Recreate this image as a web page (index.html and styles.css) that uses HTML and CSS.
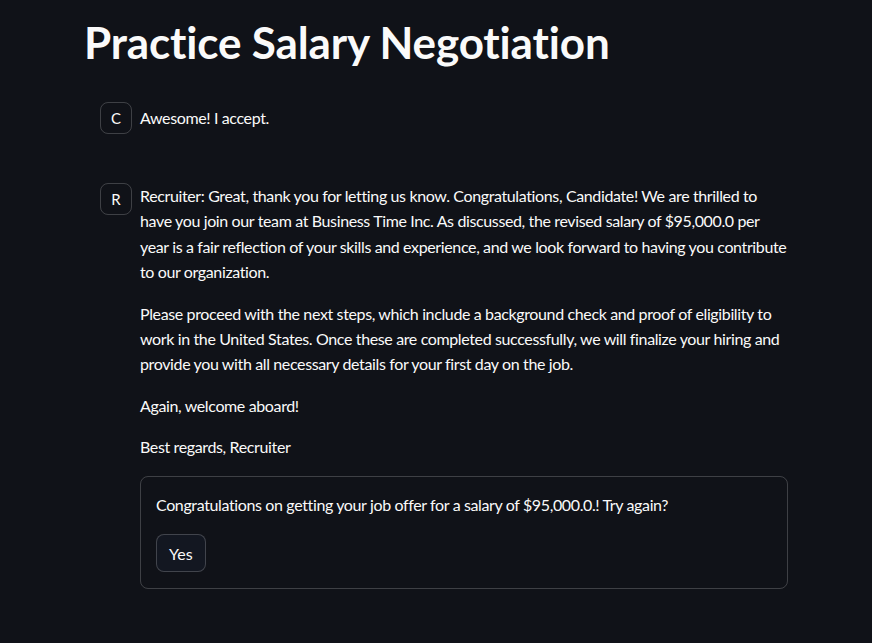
FILE: index.html
```html
<!DOCTYPE html>
<html lang="en">
<head>
<meta charset="utf-8">
<title>Practice Salary Negotiation</title>
<link rel="stylesheet" href="styles.css">
</head>
<body>
<main class="main">
  <h1 class="title">Practice Salary Negotiation</h1>

  <div class="chat-msg chat-msg--single">
    <div class="avatar">C</div>
    <div class="msg-body">
      <p>Awesome! I accept.</p>
    </div>
  </div>

  <div class="chat-msg">
    <div class="avatar">R</div>
    <div class="msg-body">
      <p>Recruiter: Great, thank you for letting us know. Congratulations, Candidate! We are thrilled to have you join our team at Business Time Inc. As discussed, the revised salary of $95,000.0 per year is a fair reflection of your skills and experience, and we look forward to having you contribute to our organization.</p>
      <p>Please proceed with the next steps, which include a background check and proof of eligibility to work in the United States. Once these are completed successfully, we will finalize your hiring and provide you with all necessary details for your first day on the job.</p>
      <p>Again, welcome aboard!</p>
      <p>Best regards, Recruiter</p>
      <div class="form-box">
        <p class="form-text">Congratulations on getting your job offer for a salary of $95,000.0.! Try again?</p>
        <button class="btn" type="button">Yes</button>
      </div>
    </div>
  </div>
</main>
</body>
</html>
```
FILE: styles.css
```css
html, body {
  margin: 0;
  padding: 0;
  background: #101218;
  color: #fafafa;
  font-family: "Lato", "Liberation Sans", sans-serif;
  font-size: 16px;
  letter-spacing: -0.37px;
}

.main {
  padding: 0 84px;
}

.title {
  margin: 0;
  padding: 16px 0 18px;
  font-size: 44px;
  font-weight: 700;
  line-height: 52px;
  letter-spacing: -0.14px;
  color: #fafafa;
}

.chat-msg {
  display: flex;
  gap: 8px;
  padding: 16px 0 16px 16px;
}

.chat-msg--single {
  align-items: center;
  margin-bottom: 17px;
}

.avatar {
  flex: 0 0 auto;
  width: 32px;
  height: 32px;
  box-sizing: border-box;
  border: 1px solid rgba(250, 250, 250, 0.2);
  border-radius: 8px;
  display: flex;
  align-items: center;
  justify-content: center;
  font-size: 15px;
  letter-spacing: 0;
  color: #fafafa;
}

.msg-body {
  flex: 1 1 auto;
  min-width: 0;
}

.msg-body p {
  margin: 0 0 16px;
  line-height: 25.4px;
}

.chat-msg--single .msg-body p {
  margin: 0;
}

.form-box {
  border: 1px solid rgba(250, 250, 250, 0.2);
  border-radius: 8px;
  padding: 15px 15px 16px;
}

.msg-body .form-text {
  margin: 0 0 17px;
}

.btn {
  font: inherit;
  color: #fafafa;
  background: #131721;
  border: 1px solid rgba(250, 250, 250, 0.2);
  border-radius: 8px;
  height: 38px;
  padding: 0 12px;
  display: block;
}
```
